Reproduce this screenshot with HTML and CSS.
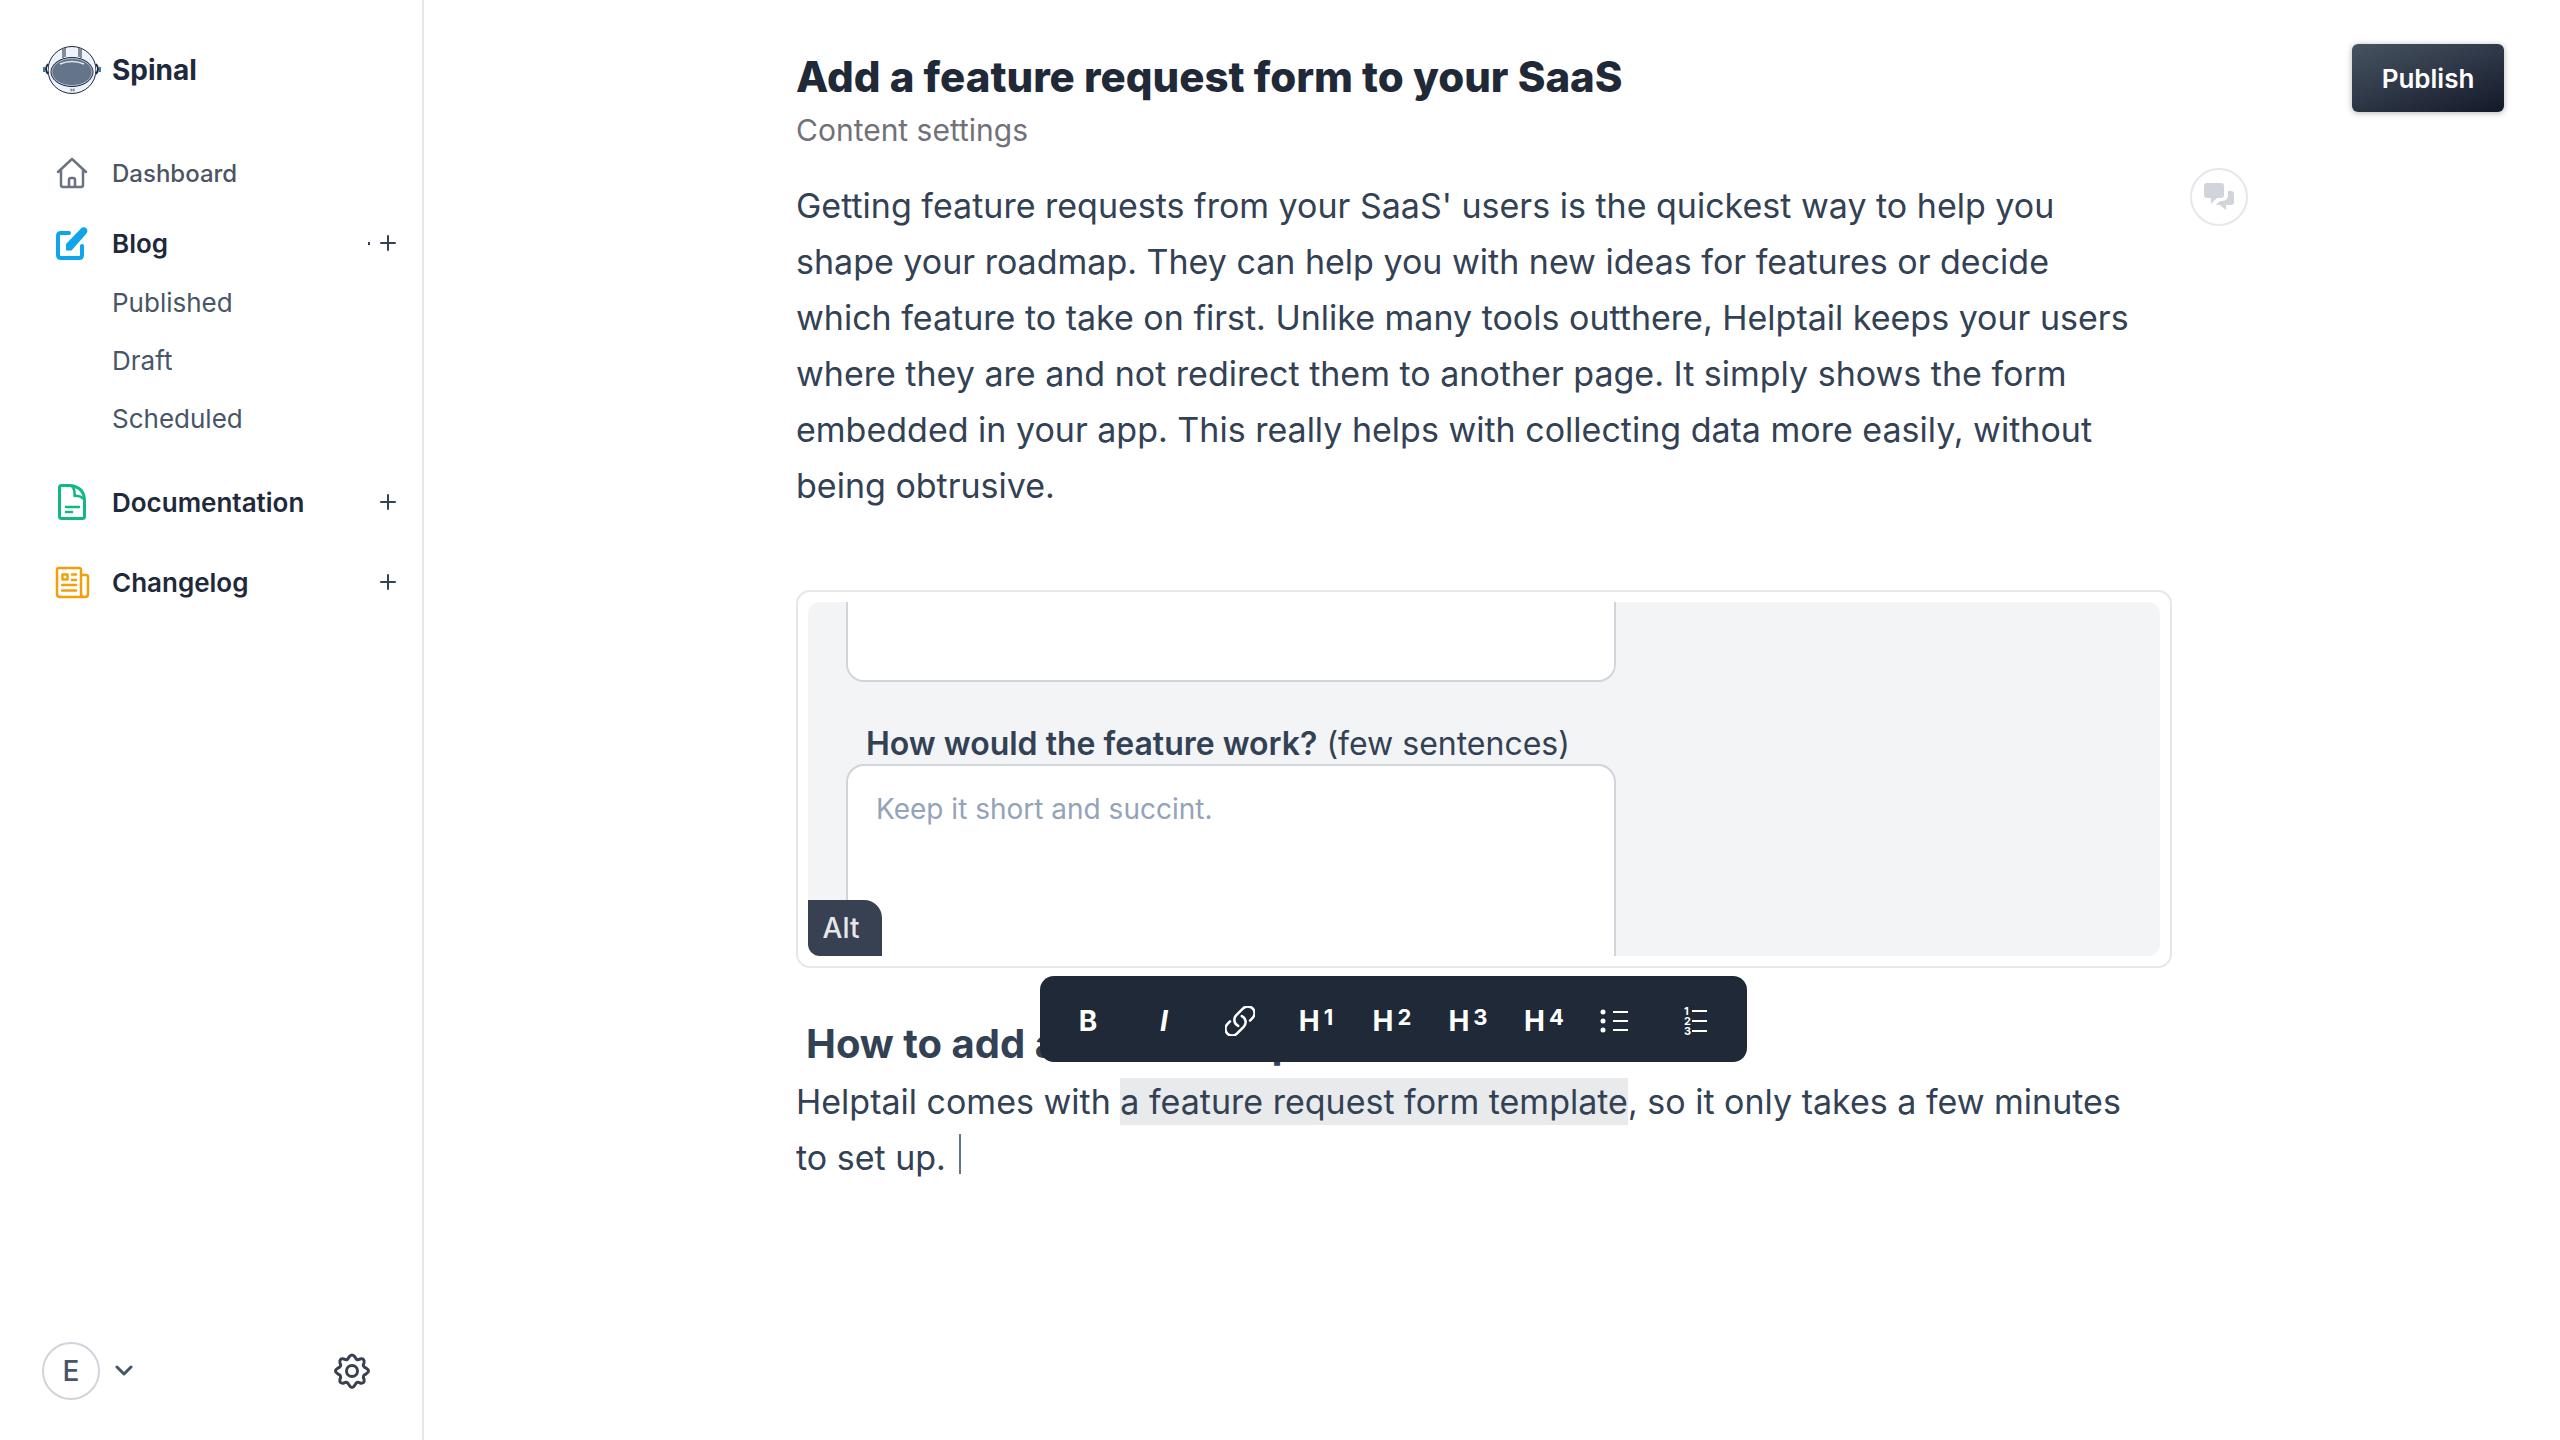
FILE: index.html
```html
<!DOCTYPE html>
<html lang="en">
<head>
    <meta charset="UTF-8">
    <meta name="viewport" content="width=device-width, initial-scale=1.0">
    <title>Spinal</title>
    <link rel="stylesheet" href="styles.css">
</head>
<body>
    <div class="app">
        <aside class="sidebar">
            <a class="brand" href="#">
                <svg class="logo" viewBox="0 0 58 50" fill="none">
                    <ellipse cx="29" cy="25" rx="24" ry="23.500" fill="#eef2f9" stroke="#1e293b"/>
                    <path d="M20 4v9M22 3v9M36 3v9M38 4v9" stroke="#1e293b"/>
                    <ellipse cx="29" cy="27" rx="21" ry="14.500" fill="#64748b" stroke="#1e293b"/>
                    <ellipse cx="29" cy="27" rx="20" ry="13.500" stroke="#a9b6ca"/>
                    <path d="M17 19q12-5 24 0" stroke="#e2e8f0" stroke-width="1.5"/>
                    <path d="M5 19q-4 5 0 10M53 19q4 5 0 10" fill="#eef2f9" stroke="#1e293b" stroke-width="2"/>
                    <path d="M1 22v5M57 22v5" stroke="#2f7fb0" stroke-width="2"/>
                    <path d="M28 43.500v3M31 43.500v3M28 45h3" stroke="#64748b"/>
                </svg>
                Spinal
            </a>

            <nav class="nav">
                <a class="nav-row nav-dashboard" href="#">
                    <svg class="icon" viewBox="0 0 36 36" fill="none" stroke="#6b7280" stroke-width="2.500" stroke-linecap="round" stroke-linejoin="round">
                        <path d="M4 17L18 4l14 13M7 15v15q0 2 2 2h18q2 0 2-2V15M15 32v-7q0-2 2-2h2q2 0 2 2v7"/>
                    </svg>
                    Dashboard
                </a>

                <div class="nav-group">
                    <div class="nav-row">
                        <svg class="icon" viewBox="0 0 36 36" fill="none">
                            <path d="M15 8H7q-3 0-3 3v19q0 3 3 3h18q3 0 3-3v-9" stroke="#0ea5e9" stroke-width="4" stroke-linecap="round"/>
                            <path d="M12 25.500v-6.500L27 3.500q3-2.500 5.500 0 2 2.500-0.500 5.500L17.500 25.500z" fill="#0ea5e9"/>
                        </svg>
                        <a class="nav-title" href="#">Blog</a>
                        <span class="dot"></span>
                        <button class="btn-add" aria-label="Add blog post">
                            <svg width="16" height="16" viewBox="0 0 16 16" stroke="#334155" stroke-width="2" stroke-linecap="round"><path d="M8 1v14M1 8h14"/></svg>
                        </button>
                    </div>
                    <a class="nav-sub" href="#">Published</a>
                    <a class="nav-sub" href="#">Draft</a>
                    <a class="nav-sub" href="#">Scheduled</a>
                </div>

                <div class="nav-row">
                    <svg class="icon" viewBox="0 0 36 36" fill="none" stroke="#10b981" stroke-width="3" stroke-linecap="round" stroke-linejoin="round">
                        <path d="M7.500 1.500h8.500Q30.500 3 30.500 17v15.500q0 2-2 2h-21q-2 0-2-2V3.500q0-2 2-2z"/>
                        <path d="M18 2q3 3 2.500 10 5-1 9.500 3M12 23h13M12 28h6" stroke-width="2.500"/>
                    </svg>
                    <a class="nav-title" href="#">Documentation</a>
                    <button class="btn-add" aria-label="Add documentation page">
                        <svg width="16" height="16" viewBox="0 0 16 16" stroke="#334155" stroke-width="2" stroke-linecap="round"><path d="M8 1v14M1 8h14"/></svg>
                    </button>
                </div>

                <div class="nav-row">
                    <svg class="icon" viewBox="0 0 36 36" fill="none" stroke="#f59e0b" stroke-width="2.500" stroke-linecap="round" stroke-linejoin="round">
                        <path d="M27 30V6q0-2-2-2H5Q3 4 3 6v24q0 3 3 3h25q3 0 3-3V13q0-2-2-2h-5M27 30q0 3 3 3"/>
                        <path d="M8.500 10.500h5v5h-5zM18 10.500h4M18 16h4M8 21h14M8 26.500h14"/>
                    </svg>
                    <a class="nav-title" href="#">Changelog</a>
                    <button class="btn-add" aria-label="Add changelog entry">
                        <svg width="16" height="16" viewBox="0 0 16 16" stroke="#334155" stroke-width="2" stroke-linecap="round"><path d="M8 1v14M1 8h14"/></svg>
                    </button>
                </div>
            </nav>

            <div class="account">
                <button class="btn-user" aria-label="Account menu">
                    <span class="avatar">E</span>
                    <svg width="20" height="12" viewBox="0 0 20 12" fill="none" stroke="#475569" stroke-width="3" stroke-linecap="round" stroke-linejoin="round"><path d="M3 2l7 7 7-7"/></svg>
                </button>
                <button class="btn-settings" aria-label="Settings">
                    <svg width="36" height="36" viewBox="0 0 36 36" fill="none" stroke="#374151" stroke-width="3" stroke-linejoin="round">
                        <path d="M15 4Q18 0 21 4Q22.500 8 26 6Q31 5 30 10Q28 13.500 32 15Q37 18 32 21Q28 22.500 30 26Q31 31 26 30Q22.500 28 21 32Q18 37 15 32Q13.500 28 10 30Q5 31 6 26Q8 22.500 4 21Q-1 18 4 15Q8 13.500 6 10Q5 5 10 6Q13.500 8 15 4z"/>
                        <circle cx="18" cy="18" r="5.500"/>
                    </svg>
                </button>
            </div>
        </aside>

        <main class="main">
            <article class="editor">
                <h1>Add a feature request form to your SaaS</h1>
                <a class="content-settings" href="#">Content settings</a>

                <p>Getting feature requests from your SaaS' users is the quickest way to help you shape your roadmap. They can help you with new ideas for features or decide which feature to take on first. Unlike many tools outthere, Helptail keeps your users where they are and not redirect them to another page. It simply shows the form embedded in your app. This really helps with collecting data more easily, without being obtrusive.</p>

                <figure class="figure">
                    <div class="preview">
                        <textarea class="field field-top" aria-label="Feature"></textarea>
                        <label for="how"><strong>How would the feature work?</strong> (few sentences)</label>
                        <textarea class="field field-bottom" id="how" placeholder="Keep it short and succint."></textarea>
                        <button class="btn-alt">Alt</button>
                    </div>
                </figure>

                <div class="section">
                    <h2>How to add a feature request form</h2>
                    <div class="toolbar">
                        <button class="tool">B</button>
                        <button class="tool tool-italic">I</button>
                        <button class="tool" aria-label="Link">
                            <svg width="30" height="30" viewBox="2 2 20 20" fill="none" stroke="#fff" stroke-width="1.700" stroke-linecap="round" stroke-linejoin="round">
                                <path d="M13.190 8.688a4.500 4.500 0 0 1 1.242 7.244l-4.500 4.500a4.500 4.500 0 0 1-6.364-6.364l1.757-1.757m13.350-.622 1.757-1.757a4.500 4.500 0 0 0-6.364-6.364l-4.500 4.500a4.500 4.500 0 0 0 1.242 7.244"/>
                            </svg>
                        </button>
                        <button class="tool">H<span class="level">1</span></button>
                        <button class="tool">H<span class="level">2</span></button>
                        <button class="tool">H<span class="level">3</span></button>
                        <button class="tool">H<span class="level">4</span></button>
                        <button class="tool tool-list" aria-label="Bulleted list">
                            <svg width="30" height="26" viewBox="0 0 30 26" fill="#fff">
                                <circle cx="4" cy="4" r="2.500"/><circle cx="4" cy="13" r="2.500"/><circle cx="4" cy="22" r="2.500"/>
                                <path d="M14 4h15M14 13h15M14 22h15" stroke="#fff" stroke-width="2"/>
                            </svg>
                        </button>
                        <button class="tool tool-list" aria-label="Numbered list">
                            <svg class="numbers" width="26" height="32" viewBox="0 0 26 32" fill="#fff">
                                <text x="1" y="10">1</text><text x="1" y="20">2</text><text x="1" y="30">3</text>
                                <path d="M9 6h15M9 16h15M9 26h15" stroke="#fff" stroke-width="2"/>
                            </svg>
                        </button>
                    </div>
                    <p>Helptail comes with <mark>a feature request form template</mark>, so it only takes a few minutes to set up. <span class="caret"></span></p>
                </div>
            </article>

            <div class="actions">
                <button class="btn-publish">Publish</button>
                <button class="btn-comments" aria-label="Comments">
                    <svg width="30" height="28" viewBox="0 0 30 28" fill="#d1d5db">
                        <path d="M3 0h14q3 0 3 3v9q0 3-3 3h-4l-6 6v-6H3q-3 0-3-3V3q0-3 3-3z"/>
                        <path d="M24 8h3q3 0 3 3v8q0 3-3 3h-5v5l-6-5h-4q2-3 5-4 7 0 7-6z"/>
                    </svg>
                </button>
            </div>
        </main>
    </div>
</body>
</html>
```

FILE: styles.css
```css
* {
    box-sizing: border-box;
}

body {
    margin: 0;
    font-family: Inter, sans-serif;
    color: #334155;
    background-color: #fff;
}

a {
    color: inherit;
    text-decoration: none;
}

button {
    padding: 0;
    border: none;
    background: none;
    font-family: inherit;
    cursor: pointer;
}

svg {
    display: block;
}

.app {
    display: grid;
    grid-template-columns: 424px 1fr;
    min-height: 100vh;
}

/* Sidebar */
.sidebar {
    display: flex;
    flex-direction: column;
    padding: 46px 22px 40px 42px;
    border-right: 2px solid #e5e7eb;
}

.brand {
    display: flex;
    align-items: center;
    gap: 10px;
    height: 48px;
    font-size: 28px;
    font-weight: 700;
    color: #1e293b;
}

.logo {
    width: 60px;
    height: 50px;
}

.nav {
    display: flex;
    flex-direction: column;
    margin-top: 54px;
    padding-left: 12px;
}

.nav-row {
    display: flex;
    align-items: center;
    height: 80px;
}

.icon {
    width: 36px;
    height: 36px;
    margin-right: 22px;
}

.nav-dashboard {
    height: 50px;
    font-size: 24px;
    font-weight: 500;
    color: #4b5563;
}

.nav-group {
    padding: 3px 0 14px;
}

.nav-group .nav-row {
    height: 84px;
    margin-bottom: -11px;
}

.nav-title {
    flex: 1;
    font-size: 26px;
    font-weight: 600;
    color: #1e293b;
}

.nav-sub {
    display: block;
    padding-left: 58px;
    font-size: 26px;
    line-height: 58px;
    color: #475569;
}

.dot {
    width: 2px;
    height: 3px;
    background-color: #334155;
}

.btn-add {
    padding: 4px 4px 4px 10px;
}

.account {
    display: flex;
    align-items: center;
    justify-content: space-between;
    margin-top: auto;
    padding-right: 30px;
}

.btn-user {
    display: flex;
    align-items: center;
    gap: 14px;
}

.avatar {
    width: 58px;
    border: 2px solid #d1d5db;
    border-radius: 50%;
    font-size: 28px;
    font-weight: 500;
    line-height: 54px;
    color: #475569;
}

/* Editor */
.main {
    display: grid;
    grid-template-columns: minmax(0, 1fr) minmax(0, 1376px) minmax(0, 1fr);
    padding: 44px 56px 0 40px;
}

.editor {
    grid-column: 2;
}

h1 {
    margin: 0;
    font-size: 42px;
    font-weight: 800;
    line-height: 66px;
    color: #1f2937;
}

.content-settings {
    display: block;
    font-size: 30px;
    line-height: 40px;
    color: #71717a;
}

.editor p {
    max-width: 1344px;
    margin: 28px 0 0;
    font-size: 34px;
    line-height: 56px;
}

.figure {
    margin: 76px 0 0;
    padding: 10px;
    border: 2px solid #e5e7eb;
    border-radius: 14px;
}

.preview {
    position: relative;
    display: flex;
    flex-direction: column;
    height: 354px;
    padding-left: 38px;
    border-radius: 12px;
    background-color: #f3f4f6;
    overflow: hidden;
}

.field {
    width: 770px;
    padding: 26px 28px;
    border: 2px solid #d1d5db;
    background-color: #fff;
    font-family: inherit;
    font-size: 28px;
    resize: none;
}

.field::placeholder {
    color: #94a3b8;
}

.field-top {
    height: 80px;
    border-top: none;
    border-radius: 0 0 18px 18px;
}

.field-bottom {
    height: 192px;
    border-bottom: none;
    border-radius: 18px 18px 0 0;
}

.preview label {
    padding: 42px 0 0 20px;
    font-size: 32px;
    line-height: 40px;
}

.preview strong {
    font-weight: 600;
}

.btn-alt {
    position: absolute;
    left: 0;
    bottom: 0;
    width: 74px;
    height: 56px;
    padding-right: 8px;
    border-radius: 0 18px 0 0;
    background-color: #374151;
    font-size: 28px;
    font-weight: 500;
    color: #e5e7eb;
}

.section {
    position: relative;
    padding-top: 52px;
}

h2 {
    margin: 0;
    padding-left: 10px;
    font-size: 40px;
    font-weight: 700;
    line-height: 48px;
}

.section p {
    margin-top: 6px;
}

mark {
    padding: 3px 0;
    background-color: #e9eaec;
    color: inherit;
}

.caret {
    display: inline-block;
    width: 2px;
    height: 40px;
    margin-left: 4px;
    background-color: #64748b;
    vertical-align: -4px;
}

.toolbar {
    position: absolute;
    top: 8px;
    left: 244px;
    display: flex;
    align-items: center;
    height: 86px;
    padding: 4px 19px 0 10px;
    border-radius: 14px;
    background-color: #1f2937;
}

.tool {
    display: flex;
    align-items: center;
    justify-content: center;
    width: 76px;
    height: 72px;
    font-size: 28px;
    font-weight: 700;
    color: #fff;
}

.tool-italic {
    font-style: italic;
}

.tool-list {
    width: 64px;
}

.tool-list + .tool-list {
    margin-left: 18px;
}

.level {
    padding: 0 0 8px 4px;
    font-size: 22px;
}

.numbers {
    font-size: 11px;
}

/* Right column */
.actions {
    display: flex;
    flex-direction: column;
}

.btn-publish {
    align-self: flex-end;
    width: 152px;
    height: 68px;
    border-radius: 6px;
    background: linear-gradient(160deg, #475360, #2e3747 50%, #131827);
    box-shadow: 0 1px 6px rgba(0, 0, 0, 0.3);
    font-size: 26px;
    font-weight: 600;
    color: #fff;
}

.btn-comments {
    display: flex;
    align-items: center;
    justify-content: center;
    width: 58px;
    height: 58px;
    margin: 56px 0 0 18px;
    border: 2px solid #e5e7eb;
    border-radius: 50%;
}
```
